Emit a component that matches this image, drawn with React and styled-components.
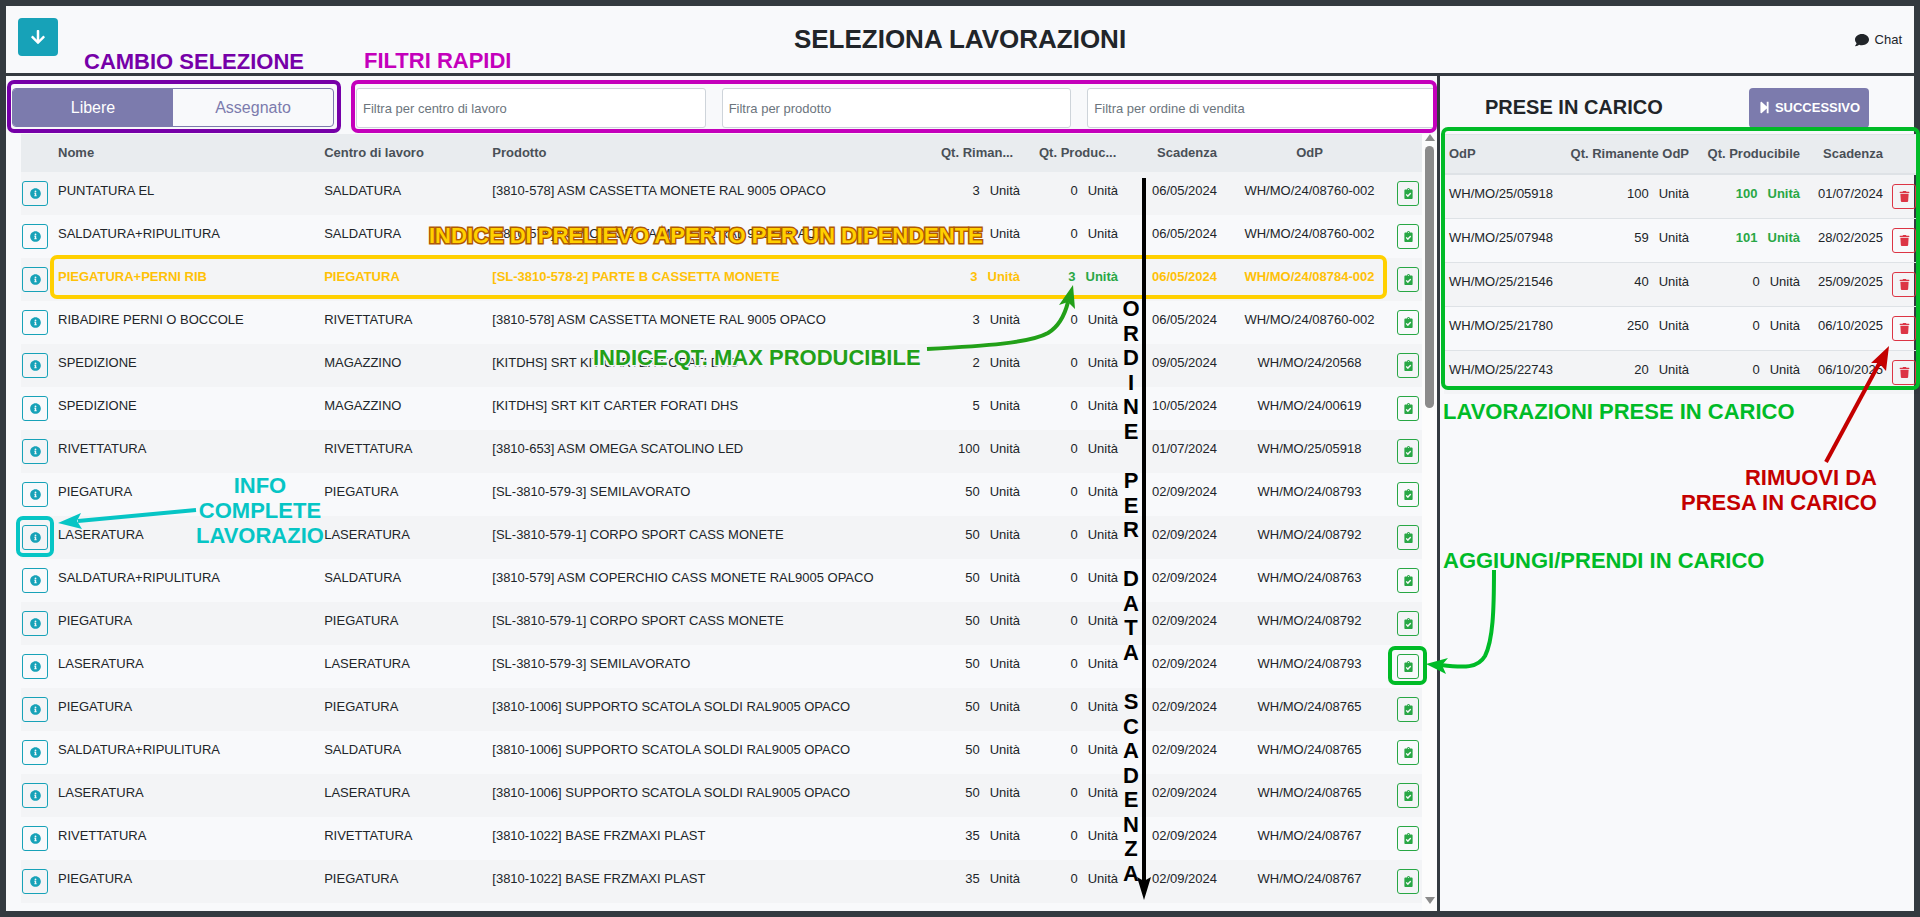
import { useState } from "react";
import styled, { createGlobalStyle, css } from "styled-components";
import {
  FaArrowDown,
  FaClipboardCheck,
  FaComment,
  FaInfoCircle,
  FaStepForward,
  FaTrash,
} from "react-icons/fa";

const GlobalStyle = createGlobalStyle`
  * {
    box-sizing: border-box;
  }
  body {
    margin: 0;
    overflow: hidden;
    font-family: "Liberation Sans", Arial, sans-serif;
    font-size: 13px;
    line-height: 20px;
    color: #212529;
  }
  button, input {
    font-family: inherit;
    margin: 0;
  }
`

const Shell = styled.div`
  display: flex;
  flex-direction: column;
  height: 100vh;
  border: 6px solid #343a40;
  background-color: #f8f9fb;
`
const Header = styled.header`
  display: grid;
  grid-template-columns: 1fr auto 1fr;
  align-items: center;
  height: 70px;
  flex-shrink: 0;
  padding: 0 12px;
  border-bottom: 3px solid #343a40;
`
const DownButton = styled.button`
  display: flex;
  align-items: center;
  justify-content: center;
  width: 40px;
  height: 38px;
  margin-bottom: 6px;
  border: none;
  border-radius: 4px;
  background-color: #17a2b8;
  color: #fff;
  font-size: 16px;
`
const Title = styled.h1`
  margin: 0 0 2px;
  font-size: 26px;
  line-height: 32px;
`
const ChatLink = styled.a`
  display: flex;
  align-items: center;
  gap: 6px;
  justify-self: end;
  color: #212529;
  text-decoration: none;

  svg {
    font-size: 14px;
  }
`
const Content = styled.div`
  display: flex;
  flex: 1;
  min-height: 0;
`
const MainPane = styled.main`
  display: flex;
  flex-direction: column;
  flex: 1;
  min-width: 0;
`
const SidePane = styled.aside`
  width: 477px;
  flex-shrink: 0;
  border-left: 3px solid #343a40;
`
const Toolbar = styled.div`
  display: flex;
  gap: 22px;
  padding: 12px 0 6px 6px;
`
const Toggle = styled.div`
  display: flex;
  width: 322px;
  height: 39px;
  border: 1px solid #7c7bad;
  border-radius: 4px;
  overflow: hidden;
`
const ToggleButton = styled.button`
  flex: 1;
  border: none;
  font-size: 16px;
  background-color: ${({ $active }) => ($active ? "#7c7bad" : "transparent")};
  color: ${({ $active }) => ($active ? "#fff" : "#7c7bad")};
`
const Filters = styled.div`
  display: grid;
  grid-template-columns: repeat(3, 1fr);
  gap: 16px;
  flex: 1;
`
const FilterInput = styled.input`
  width: 100%;
  height: 40px;
  padding: 0 6px;
  border: 1px solid #ced4da;
  border-radius: 3px;
  background-color: #fff;
  font-size: 13px;
  color: #495057;

  &::placeholder {
    color: #6c757d;
    opacity: 1;
  }
`
const TableArea = styled.div`
  display: flex;
  flex: 1;
  min-height: 0;
  padding-left: 15px;
`
const TableScroll = styled.div`
  flex: 1;
  min-width: 0;
  overflow: hidden;
`
const Table = styled.table`
  width: 100%;
  table-layout: fixed;
  border-collapse: separate;
  border-spacing: 0;

  tbody tr:nth-child(odd) {
    background-color: rgba(0, 0, 0, 0.02);
  }
`
const Col = styled.col`
  width: ${({ $width }) => $width};
`
const cell = css`
  text-align: ${({ $align }) => $align || "left"};
  white-space: nowrap;
`
const Th = styled.th`
  ${cell}
  height: 38px;
  padding: 0 5px;
  padding-left: ${({ $indent }) => ($indent ? "14px" : "5px")};
  background-color: #e9ecef;
  color: #495057;
  overflow: hidden;
`
const Td = styled.td`
  ${cell}
  height: 43px;
  padding: 9px 5px 0;
  vertical-align: top;
`
const ActionTd = styled.td`
  padding: 9px 0 0 ${({ $left }) => $left || "0"};
  vertical-align: top;
`
const Row = styled.tr`
  ${({ $open }) => $open && css`
    color: #ffc107;
    font-weight: 700;
  `}
`
const Qty = styled.span`
  display: inline-flex;
  gap: 10px;
  ${({ $ready }) => $ready && css`
    color: #28a745;
    font-weight: 700;
  `}
`
const IconButton = styled.button`
  display: flex;
  align-items: center;
  justify-content: center;
  width: ${({ $width }) => $width};
  height: 25px;
  padding: 0;
  border: 1px solid ${({ $color }) => $color};
  border-radius: 3px;
  background: none;
  color: ${({ $color }) => $color};
  font-size: 11px;
`
const ScrollTrack = styled.div`
  display: flex;
  flex-direction: column;
  align-items: center;
  width: 15px;
  padding-bottom: 7px;
  background-color: #fcfcfc;
`
const ScrollArrow = styled.span`
  border: 5px solid transparent;
  border-top: ${({ $down }) => ($down ? "7px solid #8b8b8b" : "none")};
  border-bottom: ${({ $down }) => ($down ? "none" : "7px solid #8b8b8b")};
  margin-top: ${({ $down }) => ($down ? "auto" : "0")};
`
const ScrollThumb = styled.span`
  width: 9px;
  height: 262px;
  margin-top: 5px;
  border-radius: 5px;
  background-color: #8b8b8b;
`
const SideHead = styled.div`
  display: flex;
  align-items: center;
  justify-content: space-between;
  padding: 12px 45px 6px;
`
const SideTitle = styled.h2`
  margin: 0 0 2px;
  font-size: 20px;
  line-height: 24px;
`
const NextButton = styled.button`
  display: flex;
  align-items: center;
  justify-content: center;
  gap: 4px;
  width: 120px;
  height: 40px;
  padding: 0 0 2px;
  border: none;
  border-radius: 4px;
  background-color: #7c7bad;
  color: #fff;
  font-size: 13px;
  font-weight: 700;
`
/* the taken jobs table is a little wider than its pane */
const SideTableWrap = styled.div`
  margin: 0 -5px 0 4px;

  th {
    height: 41px;
    border-top: 1px solid #dee2e6;
    border-bottom: 2px solid #dee2e6;
  }
  tbody tr + tr td {
    height: 44px;
    border-top: 1px solid #dee2e6;
  }
`

/* tutorial layer, drawn over the page */
const Notes = styled.div`
  position: absolute;
  inset: 0;
  overflow: hidden;
  pointer-events: none;
`
const Arrows = styled.svg`
  position: absolute;
  top: 0;
  left: 0;
  width: 100%;
  height: 100%;
`
const Frame = styled.div`
  position: absolute;
  left: ${({ $x }) => $x}px;
  top: ${({ $y }) => $y}px;
  width: ${({ $w }) => $w};
  height: ${({ $h }) => $h};
  border: 4px solid ${({ $color }) => $color};
  border-radius: 7px;
`
const Note = styled.div`
  position: absolute;
  left: ${({ $x }) => $x}px;
  top: ${({ $y }) => $y}px;
  color: ${({ $color }) => $color};
  font-size: 22px;
  font-weight: 700;
  line-height: 25px;
  text-align: ${({ $align }) => $align || "left"};
  white-space: pre;
  paint-order: stroke;
  -webkit-text-stroke: ${({ $outline }) => ($outline ? `3px ${$outline}` : "0")};
`
const VerticalNote = styled.div`
  position: absolute;
  left: 1120px;
  top: 297px;
  display: flex;
  flex-direction: column;
  align-items: center;
  justify-content: space-between;
  width: 22px;
  height: 589px;
  color: #000;
  font-size: 22px;
  font-weight: 700;
  line-height: 24px;

  span {
    height: 24px;
  }
`

const PURPLE = "#7600a8";
const MAGENTA = "#c400bb";
const YELLOW = "#ffd000";
const CYAN = "#06c5c5";
const GREEN = "#00bb27";
const DARK_GREEN = "#22a018";
const RED = "#c40000";

const jobs = [
  ["PUNTATURA EL", "SALDATURA", "[3810-578] ASM CASSETTA MONETE RAL 9005 OPACO", 3, 0, "06/05/2024", "WH/MO/24/08760-002"],
  ["SALDATURA+RIPULITURA", "SALDATURA", "[3810-578] ASM CASSETTA MONETE RAL 9005 OPACO", 3, 0, "06/05/2024", "WH/MO/24/08760-002"],
  ["PIEGATURA+PERNI RIB", "PIEGATURA", "[SL-3810-578-2] PARTE B CASSETTA MONETE", 3, 3, "06/05/2024", "WH/MO/24/08784-002"],
  ["RIBADIRE PERNI O BOCCOLE", "RIVETTATURA", "[3810-578] ASM CASSETTA MONETE RAL 9005 OPACO", 3, 0, "06/05/2024", "WH/MO/24/08760-002"],
  ["SPEDIZIONE", "MAGAZZINO", "[KITDHS] SRT KIT CARTER FORATI DHS", 2, 0, "09/05/2024", "WH/MO/24/20568"],
  ["SPEDIZIONE", "MAGAZZINO", "[KITDHS] SRT KIT CARTER FORATI DHS", 5, 0, "10/05/2024", "WH/MO/24/00619"],
  ["RIVETTATURA", "RIVETTATURA", "[3810-653] ASM OMEGA SCATOLINO LED", 100, 0, "01/07/2024", "WH/MO/25/05918"],
  ["PIEGATURA", "PIEGATURA", "[SL-3810-579-3] SEMILAVORATO", 50, 0, "02/09/2024", "WH/MO/24/08793"],
  ["LASERATURA", "LASERATURA", "[SL-3810-579-1] CORPO SPORT CASS MONETE", 50, 0, "02/09/2024", "WH/MO/24/08792"],
  ["SALDATURA+RIPULITURA", "SALDATURA", "[3810-579] ASM COPERCHIO CASS MONETE RAL9005 OPACO", 50, 0, "02/09/2024", "WH/MO/24/08763"],
  ["PIEGATURA", "PIEGATURA", "[SL-3810-579-1] CORPO SPORT CASS MONETE", 50, 0, "02/09/2024", "WH/MO/24/08792"],
  ["LASERATURA", "LASERATURA", "[SL-3810-579-3] SEMILAVORATO", 50, 0, "02/09/2024", "WH/MO/24/08793"],
  ["PIEGATURA", "PIEGATURA", "[3810-1006] SUPPORTO SCATOLA SOLDI RAL9005 OPACO", 50, 0, "02/09/2024", "WH/MO/24/08765"],
  ["SALDATURA+RIPULITURA", "SALDATURA", "[3810-1006] SUPPORTO SCATOLA SOLDI RAL9005 OPACO", 50, 0, "02/09/2024", "WH/MO/24/08765"],
  ["LASERATURA", "LASERATURA", "[3810-1006] SUPPORTO SCATOLA SOLDI RAL9005 OPACO", 50, 0, "02/09/2024", "WH/MO/24/08765"],
  ["RIVETTATURA", "RIVETTATURA", "[3810-1022] BASE FRZMAXI PLAST", 35, 0, "02/09/2024", "WH/MO/24/08767"],
  ["PIEGATURA", "PIEGATURA", "[3810-1022] BASE FRZMAXI PLAST", 35, 0, "02/09/2024", "WH/MO/24/08767"],
];

const takenJobs = [
  ["WH/MO/25/05918", 100, 100, "01/07/2024"],
  ["WH/MO/25/07948", 59, 101, "28/02/2025"],
  ["WH/MO/25/21546", 40, 0, "25/09/2025"],
  ["WH/MO/25/21780", 250, 0, "06/10/2025"],
  ["WH/MO/25/22743", 20, 0, "06/10/2025"],
];

function Quantity({ value, ready }) {
  return (
    <Qty $ready={ready}>
      <span>{value}</span>
      <span>Unità</span>
    </Qty>
  );
}

function JobsTable() {
  return (
    <Table>
      <colgroup>
        <Col $width="32px" />
        <Col $width="19%" />
        <Col $width="12%" />
        <Col />
        <Col $width="98px" />
        <Col $width="98px" />
        <Col $width="99px" />
        <Col $width="175px" />
        <Col $width="25px" />
      </colgroup>
      <thead>
        <tr>
          <Th />
          <Th>Nome</Th>
          <Th>Centro di lavoro</Th>
          <Th>Prodotto</Th>
          <Th $indent>Qt. Riman...</Th>
          <Th $indent>Qt. Produc...</Th>
          <Th $align="right">Scadenza</Th>
          <Th $align="center">OdP</Th>
          <Th />
        </tr>
      </thead>
      <tbody>
        {jobs.map(([name, center, product, left, producible, date, odp], index) => (
          <Row key={index} $open={producible > 0}>
            <ActionTd $left="1px">
              <IconButton type="button" $width="26px" $color="#17a2b8" aria-label="Info">
                <FaInfoCircle />
              </IconButton>
            </ActionTd>
            <Td>{name}</Td>
            <Td>{center}</Td>
            <Td>{product}</Td>
            <Td $align="right"><Quantity value={left} /></Td>
            <Td $align="right"><Quantity value={producible} ready={producible > 0} /></Td>
            <Td $align="right">{date}</Td>
            <Td $align="center">{odp}</Td>
            <ActionTd>
              <IconButton type="button" $width="22px" $color="#28a745" aria-label="Prendi in carico">
                <FaClipboardCheck />
              </IconButton>
            </ActionTd>
          </Row>
        ))}
      </tbody>
    </Table>
  );
}

function TakenTable() {
  return (
    <SideTableWrap>
      <Table>
        <colgroup>
          <Col />
          <Col $width="137px" />
          <Col $width="111px" />
          <Col $width="83px" />
          <Col $width="31px" />
        </colgroup>
        <thead>
          <tr>
            <Th>OdP</Th>
            <Th $align="right">Qt. Rimanente OdP</Th>
            <Th $align="right">Qt. Producibile</Th>
            <Th $align="right">Scadenza</Th>
            <Th />
          </tr>
        </thead>
        <tbody>
          {takenJobs.map(([odp, left, producible, date]) => (
            <Row key={odp}>
              <Td>{odp}</Td>
              <Td $align="right"><Quantity value={left} /></Td>
              <Td $align="right"><Quantity value={producible} ready={producible > 0} /></Td>
              <Td $align="right">{date}</Td>
              <ActionTd $left="4px">
                <IconButton type="button" $width="24px" $color="#dc3545" aria-label="Rimuovi">
                  <FaTrash />
                </IconButton>
              </ActionTd>
            </Row>
          ))}
        </tbody>
      </Table>
    </SideTableWrap>
  );
}

function Annotations() {
  return (
    <Notes>
      <Frame $x={7} $y={80} $w="334px" $h="53px" $color={PURPLE} />
      <Frame $x={351} $y={80} $w="calc(100% - 834px)" $h="53px" $color={MAGENTA} />
      <Frame $x={50} $y={255} $w="calc(100% - 583px)" $h="44px" $color={YELLOW} />
      <Frame $x={16} $y={516} $w="38px" $h="41px" $color={CYAN} />
      <Frame $x={1388} $y={646} $w="39px" $h="39px" $color={GREEN} />
      <Frame $x={1441} $y={127} $w="479px" $h="263px" $color={GREEN} />

      <Note $x={84} $y={49} $color={PURPLE}>CAMBIO SELEZIONE</Note>
      <Note $x={364} $y={48} $color={MAGENTA}>FILTRI RAPIDI</Note>
      <Note $x={429} $y={223} $color={YELLOW} $outline="#b05a00">
        INDICE DI PRELIEVO APERTO PER UN DIPENDENTE
      </Note>
      <Note $x={593} $y={345} $color={DARK_GREEN} $outline="#f5f6f8">
        INDICE QT. MAX PRODUCIBILE
      </Note>
      <Note $x={196} $y={473} $color={CYAN} $align="center">
        {"INFO\nCOMPLETE\nLAVORAZIO"}
      </Note>
      <Note $x={1443} $y={399} $color={GREEN}>LAVORAZIONI PRESE IN CARICO</Note>
      <Note $x={1681} $y={465} $color={RED} $align="right">
        {"RIMUOVI DA\nPRESA IN CARICO"}
      </Note>
      <Note $x={1443} $y={548} $color={GREEN}>AGGIUNGI/PRENDI IN CARICO</Note>
      <VerticalNote>
        {[..."ORDINE PER DATA SCADENZA"].map((letter, index) => (
          <span key={index}>{letter}</span>
        ))}
      </VerticalNote>

      <Arrows aria-hidden="true" fill="none" strokeWidth="4">
        <path d="M196 510L78 521" stroke={CYAN} />
        <path d="M58 523L81 513L77 521L82 529Z" fill={CYAN} />
        <path d="M927 349C985 346 1030 343 1048 333C1058 327 1064 318 1068 302" stroke={DARK_GREEN} />
        <path d="M1073 285L1059 305L1068 302L1075 309Z" fill={DARK_GREEN} />
        <path d="M1144 178V882" stroke="#000" />
        <path d="M1144 900L1137 877L1144 881L1151 877Z" fill="#000" />
        <path d="M1826 462L1880 362" stroke={RED} />
        <path d="M1889 346L1871 363L1879 363L1886 371Z" fill={RED} />
        <path d="M1494 570C1494 610 1493 640 1485 656C1478 668 1465 668 1441 665" stroke={GREEN} />
        <path d="M1426 664L1448 658L1442 665L1446 674Z" fill={GREEN} />
      </Arrows>
    </Notes>
  );
}

export default function App() {
  const [selection, setSelection] = useState("libere");

  return (
    <>
      <GlobalStyle />
      <Shell>
        <Header>
          <DownButton type="button" aria-label="Indietro"><FaArrowDown /></DownButton>
          <Title>SELEZIONA LAVORAZIONI</Title>
          <ChatLink href="#chat"><FaComment /> Chat</ChatLink>
        </Header>
        <Content>
          <MainPane>
            <Toolbar>
              <Toggle>
                <ToggleButton type="button" $active={selection === "libere"} onClick={() => setSelection("libere")}>
                  Libere
                </ToggleButton>
                <ToggleButton type="button" $active={selection === "assegnato"} onClick={() => setSelection("assegnato")}>
                  Assegnato
                </ToggleButton>
              </Toggle>
              <Filters>
                <FilterInput aria-label="Filtra per centro di lavoro" placeholder="Filtra per centro di lavoro" />
                <FilterInput aria-label="Filtra per prodotto" placeholder="Filtra per prodotto" />
                <FilterInput aria-label="Filtra per ordine di vendita" placeholder="Filtra per ordine di vendita" />
              </Filters>
            </Toolbar>
            <TableArea>
              <TableScroll>
                <JobsTable />
              </TableScroll>
              <ScrollTrack>
                <ScrollArrow />
                <ScrollThumb />
                <ScrollArrow $down />
              </ScrollTrack>
            </TableArea>
          </MainPane>
          <SidePane>
            <SideHead>
              <SideTitle>PRESE IN CARICO</SideTitle>
              <NextButton type="button"><FaStepForward /> SUCCESSIVO</NextButton>
            </SideHead>
            <TakenTable />
          </SidePane>
        </Content>
      </Shell>
      <Annotations />
    </>
  );
}
